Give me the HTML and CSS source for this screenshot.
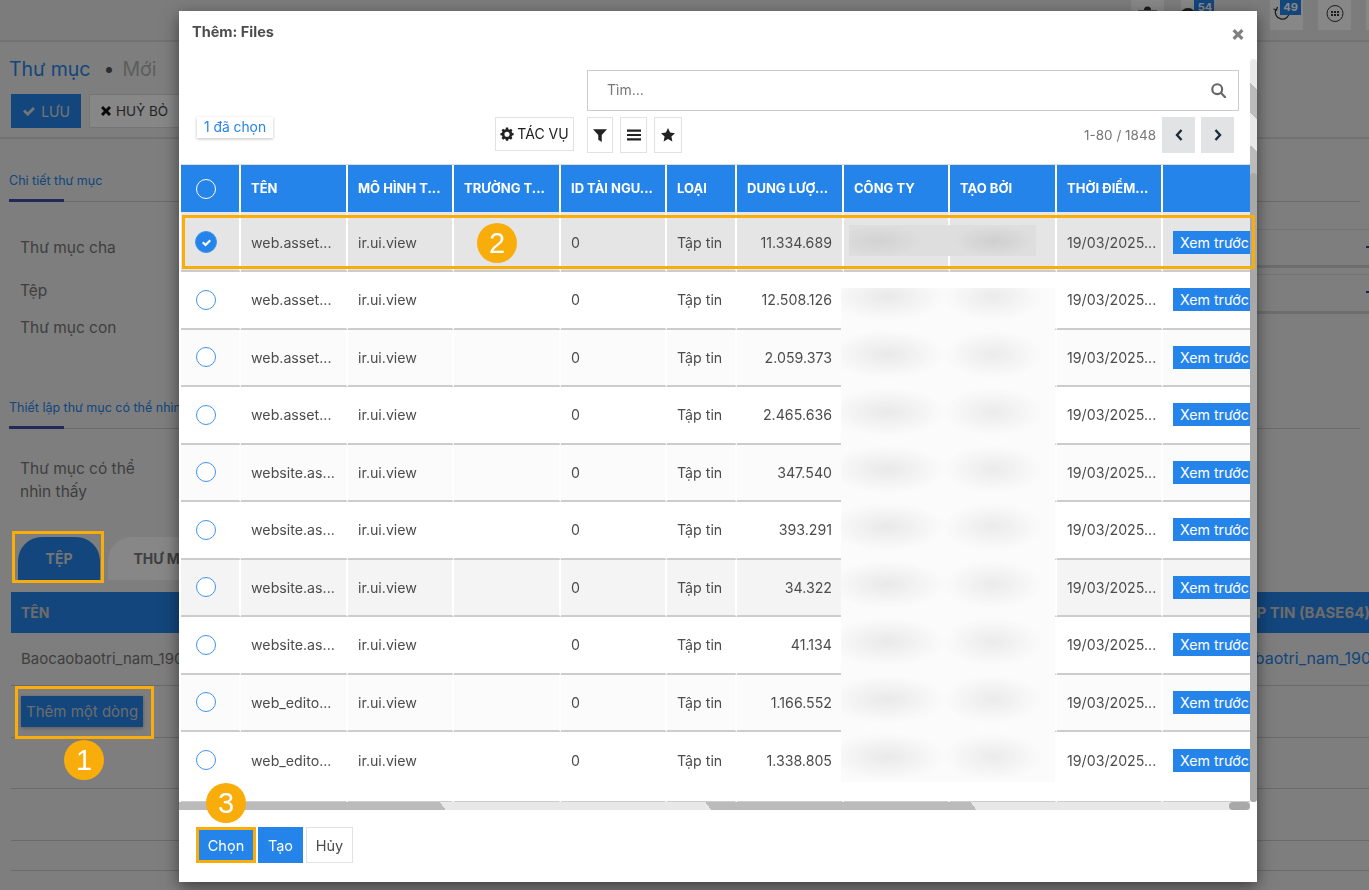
FILE: index.html
```html
<!DOCTYPE html>
<html lang="vi">
<head>
<meta charset="utf-8">
<title>Thêm: Files</title>
<link rel="stylesheet" href="styles.css">
</head>
<body>
<div class="page">
  <header class="topbar">
    <div class="tb-btn"><svg width="33" height="30" viewBox="0 0 33 30"><path d="M9 11h15l-1.500 12h-12zM13 10a3.500 3.500 0 0 1 7 0zM7 10.500h19v1.500H7z" fill="#333"/></svg></div>
    <div class="tb-btn"><svg width="33" height="30" viewBox="0 0 33 30"><circle cx="7" cy="16" r="8" fill="#333"/></svg><span class="tb-badge b54">54</span></div>
    <div class="tb-btn tb-far"><svg width="33" height="30" viewBox="0 0 33 30" fill="none" stroke="#333" stroke-width="1.300"><path d="M6 9a7 7 0 1 0 4-3.500M3.500 9l3 1 1-3"/></svg><span class="tb-badge b49">49</span></div>
    <div class="tb-btn"><svg width="33" height="30" viewBox="0 0 33 30"><circle cx="17" cy="13.500" r="8" fill="none" stroke="#333"/><path d="M13 11h2v2h-2zM16 11h2v2h-2zM19 11h2v2h-2zM13 14h2v2h-2zM16 14h2v2h-2zM19 14h2v2h-2z" fill="#333"/></svg></div>
    <div class="tb-btn tb-cut"></div>
  </header>

  <section class="crumbs">
    <h1 class="crumb-title"><span class="crumb-link">Thư mục</span><span class="crumb-dot">•</span><span class="crumb-new">Mới</span></h1>
    <div class="crumb-actions">
      <button class="btn-save"><svg class="ic12" viewBox="0 0 14 12"><path d="M1 6.500l2-2 2.700 2.700L11 2l2 2-7.300 7.200z" fill="currentColor"/></svg>LƯU</button>
      <button class="btn-cancel"><svg class="ic10" viewBox="0 0 12 12"><path d="M0 2.500L2.500 0 6 3.500 9.500 0 12 2.500 8.500 6 12 9.500 9.500 12 6 8.500 2.500 12 0 9.500 3.500 6z" fill="currentColor"/></svg>HUỶ BỎ</button>
    </div>
  </section>

  <section class="sheet">
    <div class="sec-head"><span class="sec-tab">Chi tiết thư mục</span></div>
    <div class="fields">
      <div class="field-row f1">Thư mục cha</div>
      <div class="field-row f2">Tệp</div>
      <div class="field-row f3">Thư mục con</div>
      <span class="rule r1"></span>
      <span class="rule rule-thick r2"></span>
      <span class="rule r3"></span>
      <span class="rule rule-thick r4"></span>
      <span class="caret c-a"></span>
      <span class="caret c-b"></span>
    </div>
    <div class="sec-head sec-2"><span class="sec-tab">Thiết lập thư mục có thể nhìn thấy</span></div>
    <div class="field-visible">Thư mục có thể<br>nhìn thấy</div>
    <div class="tabs">
      <span class="tab tab-on">TỆP</span>
      <span class="tab tab-off">THƯ MỤC</span>
    </div>
    <div class="bg-head"><span>TÊN</span><span class="bg-right">TẬP TIN (BASE64)</span></div>
    <div class="bg-row br1"><span>Baocaobaotri_nam_1903</span><span class="bg-link">baotri_nam_1903</span></div>
    <div class="bg-row br2"><span class="add-line">Thêm một dòng</span></div>
    <div class="bg-row br3"></div>
    <div class="bg-row br4"></div>
    <div class="bg-row br5"></div>
  </section>
</div>

<div class="backdrop"></div>

<div class="hl hl-tab"></div>
<div class="hl hl-add"></div>
<div class="step step-1">1</div>

<div class="modal">
  <div class="modal-head">
    <h4 class="modal-title">Thêm: Files</h4>
    <svg class="modal-close" viewBox="0 0 12 12"><path d="M0 2.500L2.500 0 6 3.500 9.500 0 12 2.500 8.500 6 12 9.500 9.500 12 6 8.500 2.500 12 0 9.500 3.500 6z" fill="currentColor"/></svg>
  </div>
  <div class="control">
    <div class="selected-wrap"><span class="selected">1 đã chọn</span></div>
    <div class="tool-group">
      <button class="tool tool-action"><svg class="ic13" viewBox="0 0 16 16"><path fill-rule="evenodd" d="M6.500 0h3l.4 2.200 1.500.6L13.300 1.600l2.100 2.100-1.200 1.800.6 1.500 2.200.5v3l-2.200.4-.6 1.500 1.200 1.900-2.100 2.100-1.900-1.200-1.500.6-.4 2.200h-3l-.4-2.200-1.500-.6-1.900 1.200L.6 14.300l1.200-1.900-.6-1.500L-1 10.500v-3l2.200-.5.6-1.500L.6 3.700l2.100-2.100 1.900 1.200 1.500-.6zM8 5.500a2.500 2.500 0 1 0 0 7 2.500 2.500 0 0 0 0-7z" fill="currentColor" transform="translate(1.300 .7) scale(.84)"/></svg><span class="action-label">TÁC VỤ</span></button>
      <button class="tool tool-sq t-filter"><svg class="ic13" viewBox="0 0 12 12"><path d="M0 1h12L7.500 6v6L4.500 10V6z" fill="currentColor"/></svg></button>
      <button class="tool tool-sq t-group"><svg class="ic13" viewBox="0 0 13 12"><path d="M0 1h13v2H0zM0 5h13v2H0zM0 9h13v2H0z" fill="currentColor"/></svg></button>
      <button class="tool tool-sq t-fav"><svg class="ic13" viewBox="0 0 14 14"><path d="M7 0l2.100 4.600 4.900.6-3.600 3.400 1 4.900L7 11.100 2.600 13.500l1-4.900L0 5.200l4.900-.6z" fill="currentColor"/></svg></button>
    </div>
    <div class="control-right">
      <div class="search">
        <span class="search-ph">Tìm...</span>
        <svg class="search-ic" viewBox="0 0 14 14" fill="none" stroke="currentColor" stroke-width="2"><circle cx="5.800" cy="5.800" r="4.600"/><path d="M9.200 9.200l4 4" stroke-linecap="round"/></svg>
      </div>
      <div class="pager">
        <span class="pager-val">1-80 / 1848</span>
        <button class="pg"><svg class="ic12" viewBox="0 0 8 12"><path d="M6.500 1L2 6l4.500 5" fill="none" stroke="currentColor" stroke-width="2.400"/></svg></button>
        <button class="pg"><svg class="ic12" viewBox="0 0 8 12"><path d="M1.500 1L6 6l-4.500 5" fill="none" stroke="currentColor" stroke-width="2.400"/></svg></button>
      </div>
    </div>
  </div>
  <div class="list">
    <table class="grid">
      <colgroup>
        <col class="c1"><col class="cw"><col class="cn"><col class="cw"><col class="cn"><col class="c6"><col class="cw"><col class="cn"><col class="cw"><col class="cn"><col class="c11">
      </colgroup>
      <thead>
        <tr><th class="cell-check"><span class="radio radio-h"></span></th><th>TÊN</th><th>MÔ HÌNH T...</th><th>TRƯỜNG T...</th><th>ID TÀI NGU...</th><th>LOẠI</th><th>DUNG LƯỢ...</th><th>CÔNG TY</th><th>TẠO BỞI</th><th>THỜI ĐIỂM...</th><th></th></tr>
      </thead>
      <tbody>
        <tr class="sel"><td class="cell-check"><span class="radio radio-on"><svg viewBox="0 0 14 12"><path d="M1 6.500l2-2 2.700 2.700L11 2l2 2-7.300 7.200z" fill="#fff"/></svg></span></td><td>web.asset...</td><td>ir.ui.view</td><td></td><td>0</td><td>Tập tin</td><td class="num">11.334.689</td><td></td><td></td><td>19/03/2025...</td><td class="cell-prev"><span class="prev">Xem trước</span></td></tr>
        <tr><td class="cell-check"><span class="radio"></span></td><td>web.asset...</td><td>ir.ui.view</td><td></td><td>0</td><td>Tập tin</td><td class="num">12.508.126</td><td></td><td></td><td>19/03/2025...</td><td class="cell-prev"><span class="prev">Xem trước</span></td></tr>
        <tr><td class="cell-check"><span class="radio"></span></td><td>web.asset...</td><td>ir.ui.view</td><td></td><td>0</td><td>Tập tin</td><td class="num">2.059.373</td><td></td><td></td><td>19/03/2025...</td><td class="cell-prev"><span class="prev">Xem trước</span></td></tr>
        <tr><td class="cell-check"><span class="radio"></span></td><td>web.asset...</td><td>ir.ui.view</td><td></td><td>0</td><td>Tập tin</td><td class="num">2.465.636</td><td></td><td></td><td>19/03/2025...</td><td class="cell-prev"><span class="prev">Xem trước</span></td></tr>
        <tr><td class="cell-check"><span class="radio"></span></td><td>website.as...</td><td>ir.ui.view</td><td></td><td>0</td><td>Tập tin</td><td class="num">347.540</td><td></td><td></td><td>19/03/2025...</td><td class="cell-prev"><span class="prev">Xem trước</span></td></tr>
        <tr><td class="cell-check"><span class="radio"></span></td><td>website.as...</td><td>ir.ui.view</td><td></td><td>0</td><td>Tập tin</td><td class="num">393.291</td><td></td><td></td><td>19/03/2025...</td><td class="cell-prev"><span class="prev">Xem trước</span></td></tr>
        <tr><td class="cell-check"><span class="radio"></span></td><td>website.as...</td><td>ir.ui.view</td><td></td><td>0</td><td>Tập tin</td><td class="num">34.322</td><td></td><td></td><td>19/03/2025...</td><td class="cell-prev"><span class="prev">Xem trước</span></td></tr>
        <tr><td class="cell-check"><span class="radio"></span></td><td>website.as...</td><td>ir.ui.view</td><td></td><td>0</td><td>Tập tin</td><td class="num">41.134</td><td></td><td></td><td>19/03/2025...</td><td class="cell-prev"><span class="prev">Xem trước</span></td></tr>
        <tr><td class="cell-check"><span class="radio"></span></td><td>web_edito...</td><td>ir.ui.view</td><td></td><td>0</td><td>Tập tin</td><td class="num">1.166.552</td><td></td><td></td><td>19/03/2025...</td><td class="cell-prev"><span class="prev">Xem trước</span></td></tr>
        <tr><td class="cell-check"><span class="radio"></span></td><td>web_edito...</td><td>ir.ui.view</td><td></td><td>0</td><td>Tập tin</td><td class="num">1.338.805</td><td></td><td></td><td>19/03/2025...</td><td class="cell-prev"><span class="prev">Xem trước</span></td></tr>
      </tbody>
    </table>
    <div class="blur-block"></div>
    <div class="blur-sel"></div>
  </div>
  <div class="hscroll"></div>
  <div class="vscroll"></div>
  <div class="modal-foot">
    <button class="fbtn fbtn-pri fbtn-choose">Chọn</button>
    <button class="fbtn fbtn-pri">Tạo</button>
    <button class="fbtn fbtn-sec">Hủy</button>
  </div>
  <div class="hl hl-row"></div>
  <div class="step step-2">2</div>
  <div class="step step-3">3</div>
</div>
</body>
</html>
```

FILE: styles.css
```css
* { box-sizing: border-box; }
html, body { margin: 0; height: 100%; overflow: hidden; }
body { font-family: "Inter", "Liberation Sans", sans-serif; color: #4c4c4c; background: #efefef; font-size: 14px; }
button { font: inherit; margin: 0; cursor: pointer; }

.page { width: 1369px; height: 890px; background: #efefef; overflow: hidden; }
.topbar { height: 42px; background: #eaeaea; border-bottom: 2px solid #d8d8d8; display: flex; justify-content: flex-end; gap: 15px; }
.tb-btn { position: relative; width: 33px; height: 30px; background: #fff; overflow: hidden; margin-left: 2px; }
.tb-btn svg { display: block; }
.tb-far { margin-left: 41px; }
.tb-btn:nth-child(4), .tb-cut { margin-left: 0; }
.tb-cut { width: 3px; }
.tb-badge { position: absolute; top: 0; background: #2484ea; color: #fff; font-size: 11px; font-weight: 700; text-align: center; line-height: 15px; height: 15px; }
.b54 { left: 13px; width: 22px; }
.b49 { left: 10px; width: 21px; }

.crumbs { padding: 15px 11px 0; height: 97px; border-bottom: 2px solid #d8d8d8; }
.crumb-title { margin: 0 0 0 -2px; font-size: 19.500px; font-weight: 400; line-height: 25px; display: flex; }
.crumb-link { color: #2484ea; }
.crumb-dot { margin: 0 8px 0 13px; color: #555; }
.crumb-new { color: #b0b0b0; }
.crumb-actions { display: flex; gap: 8px; margin-top: 12px; }
.btn-save { height: 34px; width: 70px; border: 0; background: #2484ea; color: #ddd; display: flex; align-items: center; justify-content: center; gap: 5px; font-size: 14px; padding: 0; }
.btn-cancel { height: 34px; width: 100px; border: 1px solid #ddd; background: #fff; color: #444; display: flex; align-items: center; gap: 5px; font-size: 13.500px; padding: 0 0 0 11px; }
.btn-cancel svg { color: #111; }

.sheet { padding: 0 9px; }
.sec-head { margin-top: 34px; height: 29px; border-bottom: 1px solid #c8c8c8; position: relative; font-size: 12.500px; color: #2484ea; }
.sec-tab { display: block; white-space: nowrap; line-height: 16px; }
.sec-head::after { content: ""; position: absolute; left: 0; bottom: -1px; width: 55px; height: 3px; background: #3f4ea8; }
.fields { height: 198px; font-size: 15.500px; position: relative; color: #777; }
.field-row { position: absolute; left: 11px; line-height: 20px; }
.f1 { top: 36px; }
.f2 { top: 79px; }
.f3 { top: 116px; }
.rule { position: absolute; left: 1000px; right: -9px; height: 1px; background: #dadada; }
.rule-thick { height: 3px; background: #cfcfcf; }
.r1 { top: 27px; }
.r2 { top: 63px; }
.r3 { top: 72px; }
.r4 { top: 109px; }
.caret { position: absolute; right: -9px; width: 3px; height: 2px; background: #2a4a9a; }
.c-a { top: 44px; }
.c-b { top: 89px; }
.sec-2 { margin-top: 0; }
.field-visible { padding: 28px 0 0 11px; font-size: 15.500px; line-height: 23px; color: #777; height: 108px; }
.tabs { display: flex; gap: 8px; padding-left: 9px; height: 43px; }
.tab { width: 82px; height: 43px; border-radius: 24px 24px 0 0; color: #777; font-weight: 700; font-size: 14px; display: flex; align-items: center; justify-content: center; white-space: nowrap; }
.tab-off { width: 118px; background: #fff; }
.tab-on { background: #2484ea; color: #ddd; }
.bg-head { margin: 12px -9px 0 2px; height: 41px; background: #2484ea; color: #ccc; font-weight: 700; font-size: 14px; display: flex; justify-content: space-between; align-items: center; padding: 0 0 0 10px; white-space: nowrap; overflow: hidden; }
.bg-right { font-size: 15px; margin-right: -1px; }
.bg-row { margin: 0 -9px 0 2px; border-bottom: 1px solid #c8c8c8; display: flex; justify-content: space-between; align-items: center; padding: 0 0 0 10px; font-size: 15px; color: #777; white-space: nowrap; overflow: hidden; }
.br1 { height: 53px; padding-bottom: 2px; }
.br2 { height: 52px; }
.br3 { height: 51px; }
.br4 { height: 52px; }
.br5 { height: 30px; }
.bg-link { color: #2484ea; font-size: 16px; margin-right: -12px; }
.add-line { background: #2484ea; color: #ccc; height: 31px; line-height: 31px; padding: 0 5px; box-shadow: 0 1px 4px rgba(0,0,0,.3); margin-bottom: 1px; }

.backdrop { position: fixed; inset: 0; background: rgba(0,0,0,.47); }

.hl { position: absolute; border: 3px solid #f9ad0a; }
.hl-tab { left: 12px; top: 531px; width: 92px; height: 52px; }
.hl-add { left: 15px; top: 686px; width: 139px; height: 53px; }
.hl-row { left: 3px; top: 204px; width: 1073px; height: 54px; }
.step { position: absolute; width: 40px; height: 40px; border-radius: 50%; background: #f9ad0a; color: #fff; font: 400 29px/40px "Liberation Sans", sans-serif; text-align: center; }
.step-1 { left: 64px; top: 740px; }
.step-2 { left: 298px; top: 212px; }
.step-3 { left: 27px; top: 772px; }

.modal { position: absolute; left: 179px; top: 11px; width: 1078px; height: 871px; background: #fff; box-shadow: 0 5px 15px rgba(0,0,0,.5); }
.modal-head { height: 49px; position: relative; }
.modal-title { margin: 0; padding: 13px 0 0 13px; font-size: 14.500px; line-height: 16px; font-weight: 700; color: #4c4c4c; }
.modal-close { position: absolute; right: 13px; top: 18px; width: 12px; height: 11px; color: #808080; }
.control { height: 104px; position: relative; padding-left: 18px; }
.selected-wrap { padding-top: 57px; }
.selected { display: inline-block; height: 21px; line-height: 21px; padding: 0 7px; font-size: 13.800px; color: #2484ea; background: #fff; box-shadow: 0 1px 3px rgba(0,0,0,.25); white-space: nowrap; }
.tool-group { display: flex; gap: 7px; padding-top: 57px; align-items: flex-start; position: absolute; left: 316px; top: 0; }
.tool { background: #fff; border: 1px solid #e2e2e2; color: #222; display: flex; align-items: center; justify-content: center; padding: 0; }
.tool-action { width: 79px; height: 34px; gap: 3px; font-size: 14px; margin-right: 6px; }
.action-label { position: relative; top: -1px; white-space: nowrap; }
.tool-sq { width: 26px; height: 36px; }
.t-group { width: 27px; }
.t-fav { width: 28px; }
.ic10 { width: 10px; height: 10px; }
.ic12 { width: 14px; height: 12px; }
.ic13 { width: 14px; height: 14px; }
.control-right { position: absolute; left: 408px; right: 18px; top: 10px; }
.search { height: 41px; border: 1px solid #ccc; display: flex; align-items: center; justify-content: space-between; padding: 0 12px 2px 19px; }
.search-ph { font-size: 14px; color: #777; }
.search-ic { width: 15px; height: 15px; color: #666; margin-top: 2px; }
.pager { display: flex; justify-content: flex-end; align-items: center; margin-top: 6px; padding-right: 5px; height: 36px; gap: 6px; }
.pager-val { color: #777; font-size: 13.500px; }
.pg { width: 33px; height: 36px; border: 0; background: #e2e3e5; color: #1d2b3a; display: flex; align-items: center; justify-content: center; padding: 0; }

.list { position: relative; margin-left: 2px; width: 1069px; height: 646px; overflow: hidden; border-top: 1px solid #ddd; }
.grid { border-collapse: separate; border-spacing: 0; table-layout: fixed; width: 1072px; font-size: 14.200px; }
.c1 { width: 60px; }
.cw { width: 107px; }
.cn { width: 106px; }
.c6 { width: 70px; }
.c11 { width: 90px; }
.grid th { height: 47px; background: #2484ea; color: #fff; font-size: 13px; font-weight: 700; text-align: left; padding: 0 10px 1px; border-right: 2px solid #fff; white-space: nowrap; overflow: hidden; }
.grid td { height: 57.500px; padding: 0 10px; border-right: 2px solid #fff; border-bottom: 2px solid #ccc; color: #4c4c4c; white-space: nowrap; overflow: hidden; background: #fff; }
.grid tbody tr:first-child td { height: 60px; border-top: 2px solid #e6e6e6; }
.grid tbody tr:nth-child(odd) td { background: #fbfbfb; }
.grid tbody tr.sel td { background: #e5e5e5; }
.grid tbody tr:nth-child(7) td { background: #f4f4f4; }
.grid tbody tr:last-child td { height: 71px; padding-bottom: 13px; background: #fff; }
.grid .cell-check { text-align: left; padding: 0 0 0 15px; }
.grid th.cell-check { padding-bottom: 0; }
.grid tbody tr:last-child .cell-check { padding-left: 15px; }
.num { text-align: right; }
.radio { display: block; width: 20px; height: 20px; border: 1px solid #3f94ee; border-radius: 50%; background: #fff; }
.radio-h { background: transparent; border-color: #fff; }
.radio-on { width: 22px; height: 22px; margin-left: -1px; background: #2484ea; display: flex; align-items: center; justify-content: center; }
.radio-on svg { width: 11px; height: 9px; }
.grid .cell-prev { padding-right: 0; overflow: hidden; }
.prev { display: inline-block; background: #2484ea; color: #fff; height: 23px; line-height: 23px; padding: 0 7px; font-size: 14.200px; white-space: nowrap; }

.blur-block { position: absolute; left: 660px; top: 123px; width: 214px; height: 494px; background-color: #fbfbfb; background-image: radial-gradient(ellipse 58px 24px at 46px 28.750px, #e9e9e9, rgba(233,233,233,0)), radial-gradient(ellipse 50px 24px at 152px 28.750px, #ebebeb, rgba(235,235,235,0)); background-size: 214px 57.500px; background-position: 0 -20px; }
.blur-sel { position: absolute; left: 668px; top: 60px; width: 187px; height: 31px; background-color: #dedede; background-image: radial-gradient(ellipse 45px 16px at 30px 16px, #d2d2d2, rgba(210,210,210,0)), radial-gradient(ellipse 40px 16px at 145px 16px, #cfcfcf, rgba(207,207,207,0)); }
.hscroll { position: absolute; left: 0; top: 791px; width: 1071px; height: 8px; background: linear-gradient(53deg, #bbb 0 213px, #e8e8e8 213px 425px, #bbb 425px 637px, #e8e8e8 637px); }
.hscroll::after { content: ""; position: absolute; right: 0; top: 0; width: 21px; height: 8px; border-radius: 4px; background: #a8a8a8; }
.vscroll { position: absolute; right: 0; top: 48px; width: 7px; height: 743px; border-radius: 4px; background: linear-gradient(220.600deg, #e8e8e8 0 22.800px, #bbb 22.800px 45.600px, #e8e8e8 45.600px 70px, #bbb 70px); overflow: hidden; }
.vscroll::after { content: ""; position: absolute; left: 0; right: 0; top: 114px; bottom: 0; background: #a8a8a8; border-radius: 4px 4px 0 0; }

.modal-foot { display: flex; gap: 2px; padding: 17px 0 0 17px; }
.fbtn { height: 36px; border: 0; font-size: 14.500px; padding: 0; }
.fbtn-pri { background: #2484ea; color: #fff; width: 45px; }
.fbtn-choose { width: 60px; border: 3px solid #f9ad0a; }
.fbtn-sec { margin-left: 1px; background: #fff; color: #4c4c4c; border: 1px solid #e2e2e2; width: 47px; }
```
